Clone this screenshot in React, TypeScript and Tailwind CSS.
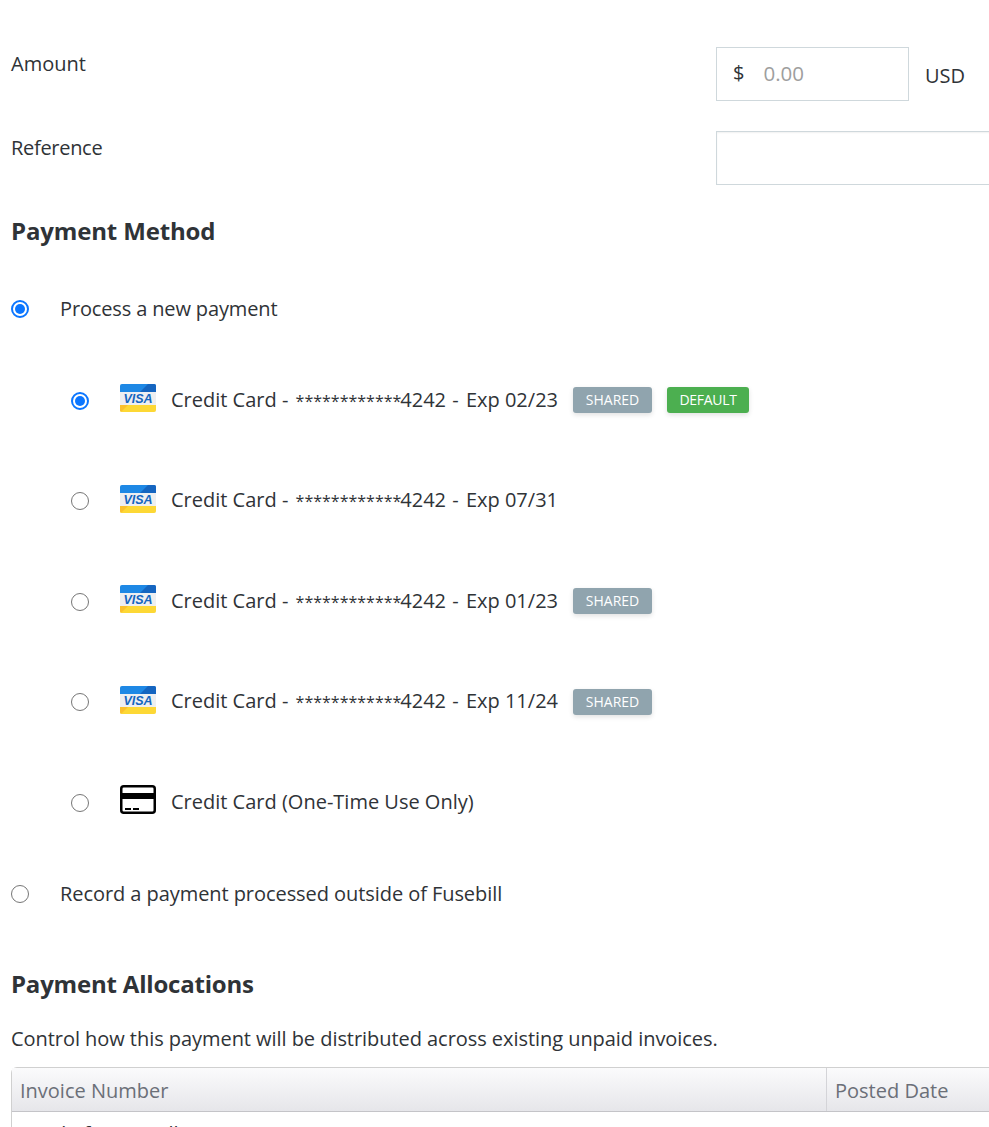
function Visa() {
  return (
    <svg width="36" height="28" viewBox="0 0 36 28" className="shrink-0 mb-[4px]">
      <defs>
        <clipPath id="visa-clip"><rect x="0" y="0" width="36" height="28" rx="2" /></clipPath>
      </defs>
      <g clipPath="url(#visa-clip)">
        <rect width="36" height="28" fill="#eeeff1" />
        <rect width="36" height="8" fill="#1e88e5" />
        <path d="M20 8 L28 0 H36 V8 Z" fill="#1565c0" />
        <rect y="21" width="36" height="7" fill="#fdd835" />
        <path d="M0 28 V21 H8 L1 28 Z" fill="#fbc02d" />
        <text x="18" y="18.8" textAnchor="middle" fontSize="12.5" fontWeight="700" fontStyle="italic" fill="#1565c0" fontFamily="'Liberation Sans', sans-serif">VISA</text>
      </g>
    </svg>
  );
}
function Generic() {
  return (
    <svg width="36" height="29" viewBox="0 0 36 29" className="shrink-0 mb-[6px]">
      <rect x="1.25" y="1.25" width="33.5" height="26.5" rx="2.5" fill="#fff" stroke="#000" strokeWidth="2.5" />
      <rect x="1" y="8" width="34" height="6" fill="#000" />
      <rect x="5" y="23" width="6" height="2" fill="#000" />
      <rect x="13" y="23" width="6" height="2" fill="#000" />
    </svg>
  );
}
function Radio({ on, shift }: { on?: boolean; shift?: boolean }) {
  return on ? (
    <span className={`w-[18px] h-[18px] rounded-full border-2 border-[#0b76ff] flex items-center justify-center shrink-0 bg-white ${shift ? "mt-[1px]" : ""}`}>
      <span className="w-[10px] h-[10px] rounded-full bg-[#0b76ff]" />
    </span>
  ) : (
    <span className={`w-[18px] h-[18px] rounded-full border-[1.5px] border-[#767676] shrink-0 bg-white ${shift ? "mt-[1px]" : ""}`} />
  );
}
function Badge({ children, green }: { children: string; green?: boolean }) {
  return (
    <span className={`h-[26px] flex items-center justify-center rounded-[3px] text-white text-[14px] shadow-[0_2px_5px_rgba(0,0,0,0.12)] ml-[15px] ${green ? "bg-[#4caf50] w-[82px] tracking-[-0.3px]" : "bg-[#90a4ae] w-[79px]"}`}>
      {children}
    </span>
  );
}
const cards: { exp: string; badges: [string, boolean?][]; on?: boolean }[] = [
  { exp: "02/23", badges: [["SHARED"], ["DEFAULT", true]], on: true },
  { exp: "07/31", badges: [] },
  { exp: "01/23", badges: [["SHARED"]] },
  { exp: "11/24", badges: [["SHARED"]] },
];
export default function App() {
  return (
    <div className="w-[989px] h-[1127px] overflow-hidden bg-white text-[#2f3337] text-[20px] leading-[28px] pl-[11px] font-['Open_Sans','Noto_Sans',sans-serif]">
      <div className="flex pt-[47px] h-[131px]">
        <div className="w-[705px] pt-[3px] shrink-0">Amount</div>
        <div className="w-[193px] h-[54px] border border-[#cfd8dc] flex items-center pl-[16px] pb-[2px] shrink-0">
          <span>$</span><span className="ml-[19px] text-[#9e9e9e] text-[20.5px]">0.00</span>
        </div>
        <div className="ml-[16px] pt-[15px]">USD</div>
      </div>
      <div className="flex h-[54px] w-[1100px]">
        <div className="w-[705px] pt-[3px] shrink-0 tracking-[-0.3px]">Reference</div>
        <div className="w-[400px] h-[54px] border border-[#cfd8dc] shadow-[inset_0_1px_2px_rgba(0,0,0,0.06)]" />
      </div>
      <h2 className="font-bold text-[24px] leading-[32px] mt-[30px] tracking-[-0.15px]">Payment Method</h2>
      <div className="flex items-center mt-[48px] h-[28px]"><Radio on /><span className="ml-[31px] tracking-[-0.14px]">Process a new payment</span></div>
      <div className="mt-[27px] ml-[60px] flex flex-col">
        {cards.map((c) => (
          <div key={c.exp} className="flex items-center h-[100.5px]">
            <Radio on={c.on} shift />
            <span className="w-[31px]" />
            <Visa />
            <span className="ml-[15px]">Credit Card - <span className="text-[16px] ml-[2px]">************</span><span className="-ml-[1px]">4242</span> <span className="ml-[1px]">-</span> <span className="ml-[2px]">Exp {c.exp}</span></span>
            {c.badges.map(([b, g]) => <Badge key={b} green={g}>{b}</Badge>)}
          </div>
        ))}
        <div className="flex items-center h-[100.5px]">
          <Radio shift />
          <span className="w-[31px]" />
          <Generic />
          <span className="ml-[15px]">Credit Card (One-Time Use Only)</span>
        </div>
      </div>
      <div className="flex items-center mt-[27px] h-[28px]"><Radio /><span className="ml-[31px] tracking-[-0.065px]">Record a payment processed outside of Fusebill</span></div>
      <h2 className="font-bold text-[24px] leading-[32px] mt-[60px] tracking-[-0.2px]">Payment Allocations</h2>
      <p className="mt-[25px] tracking-[-0.05px]">Control how this payment will be distributed across existing unpaid invoices.</p>
      <div className="mt-[14px] w-[1100px] border-l border-t border-[#d0d0d0] rounded-tl-[6px]">
        <div className="flex h-[44px] bg-gradient-to-b from-[#fbfbfc] to-[#e6e6ea] border-b border-[#c4c4c8] text-[#6b6f78]">
          <div className="w-[815px] pl-[8px] pt-[4px] flex items-center border-r border-[#d4d4d8]">Invoice Number</div>
          <div className="pl-[8px] pt-[4px] flex items-center">Posted Date</div>
        </div>
        <div className="pl-[8px] pt-[8px]">Total of a sum all</div>
      </div>
    </div>
  );
}
